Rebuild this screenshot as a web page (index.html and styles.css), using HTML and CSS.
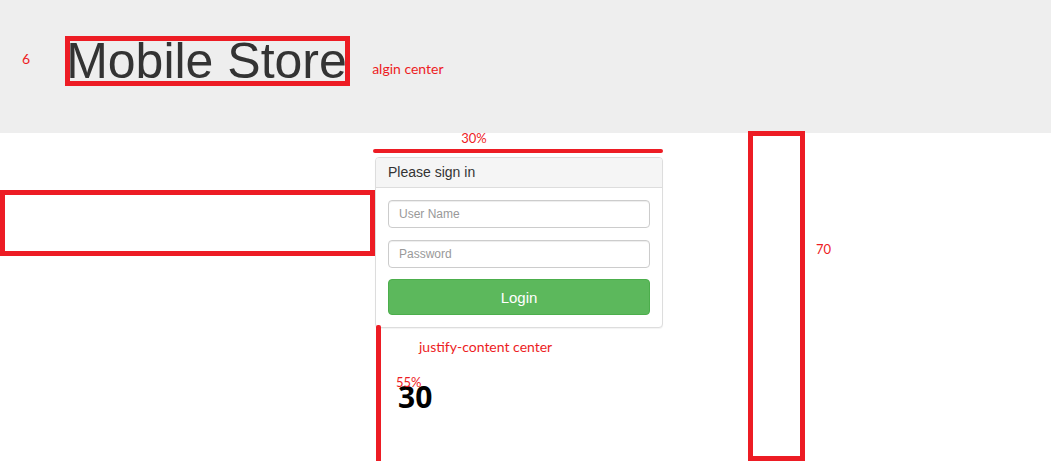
FILE: index.html
```html
<!DOCTYPE html>
<html lang="en">
<head>
<meta charset="utf-8">
<title>Mobile Store</title>
<link rel="stylesheet" href="styles.css">
</head>
<body>
<header class="top">
  <span class="note note-six">6</span>
  <h1 class="brand">Mobile Store</h1>
  <span class="note note-align">algin center</span>
</header>
<main class="main">
  <div class="left-col">
    <div class="mark-box mark-wide"></div>
  </div>
  <div class="center-col">
    <div class="width-mark">
      <span class="note note-pct">30%</span>
      <div class="width-bar"></div>
    </div>
    <div class="panel">
      <div class="panel-heading">Please sign in</div>
      <form class="panel-body">
        <input class="field" type="text" placeholder="User Name">
        <input class="field field-last" type="password" placeholder="Password">
        <button class="btn-login" type="button">Login</button>
      </form>
    </div>
    <div class="mark-line"></div>
    <span class="note note-justify">justify-content center</span>
    <span class="big-num">30</span>
    <span class="note note-55">55%</span>
  </div>
  <div class="right-col">
    <div class="mark-box mark-tall"></div>
    <span class="note note-70">70</span>
  </div>
</main>
</body>
</html>
```
FILE: styles.css
```css
* { box-sizing: border-box; }
html, body { margin: 0; padding: 0; }
body {
  width: 1051px;
  height: 461px;
  overflow: hidden;
  background: #fff;
  font-family: "Liberation Sans", Arial, sans-serif;
  color: #333;
}
.note {
  font-family: Lato, "Open Sans", sans-serif;
  color: #ed1c24;
  font-size: 14px;
  line-height: 1;
}
.top {
  height: 133px;
  background: #eeeeee;
  display: flex;
  align-items: flex-start;
}
.note-six { margin: 52px 0 0 22px; }
.brand {
  margin: 36px 0 0 35px;
  border: 5px solid #ed1c24;
  font-weight: normal;
  font-size: 50px;
  line-height: 40px;
  height: 50px;
  width: 285px;
  padding: 0;
  text-indent: -4px;
  white-space: nowrap;
  color: #333;
  overflow: visible;
}
.note-align { margin: 62px 0 0 22px; }

.main {
  display: flex;
  align-items: flex-start;
  height: 328px;
}
.left-col { width: 375px; flex: none; }
.mark-box { border: 5px solid #ed1c24; }
.mark-wide { margin-top: 57px; height: 66px; width: 375px; }

.center-col {
  width: 288px;
  flex: none;
  position: relative;
  height: 328px;
}
.width-mark {
  margin: -1px 0 0 -2px;
  width: 290px;
  display: flex;
  flex-direction: column;
  align-items: center;
}
.note-pct { font-size: 13px; margin-left: -88px; }
.width-bar {
  margin-top: 4px;
  height: 4px;
  width: 290px;
  background: #ed1c24;
  border-radius: 2px;
}
.panel {
  margin-top: 4px;
  border: 1px solid #dddddd;
  border-radius: 4px;
  background: #fff;
  box-shadow: 0 1px 1px rgba(0,0,0,0.05);
}
.panel-heading {
  background: #f5f5f5;
  border-bottom: 1px solid #dddddd;
  border-radius: 3px 3px 0 0;
  height: 30px;
  padding: 0 12px;
  font-size: 14px;
  line-height: 29px;
  color: #333;
}
.panel-body {
  margin: 0;
  padding: 12px 12px 12px;
  display: flex;
  flex-direction: column;
}
.field {
  height: 28px;
  border: 1px solid #cccccc;
  border-radius: 4px;
  padding: 0 10px;
  font-family: "Liberation Sans", Arial, sans-serif;
  font-size: 12px;
  color: #555;
  background: #fff;
  box-shadow: inset 0 1px 1px rgba(0,0,0,0.075);
  margin-bottom: 12px;
}
.field-last { margin-bottom: 11px; }
.field::placeholder { color: #999; }
.btn-login {
  height: 36px;
  border: 1px solid #4cae4c;
  border-radius: 4px;
  background: #5cb85c;
  color: #fff;
  font-family: "Liberation Sans", Arial, sans-serif;
  font-size: 15px;
  padding: 0;
}
.mark-line {
  position: absolute;
  left: 1px;
  top: 192px;
  width: 5px;
  height: 140px;
  background: #ed1c24;
  border-radius: 2px 2px 0 0;
}
.note-justify { position: absolute; left: 44px; top: 207px; }
.note-55 { position: absolute; left: 21px; top: 243px; font-size: 13px; }
.big-num {
  position: absolute;
  left: 23px;
  top: 246px;
  font-family: "Open Sans", sans-serif;
  font-weight: 700;
  font-size: 30px;
  line-height: 1.2;
  color: #000;
}
.right-col {
  margin-left: 85px;
  display: flex;
  align-items: flex-start;
  flex: none;
}
.mark-tall { margin-top: -2px; width: 57px; height: 330px; }
.note-70 { margin: 110px 0 0 11px; font-size: 13px; }
```
